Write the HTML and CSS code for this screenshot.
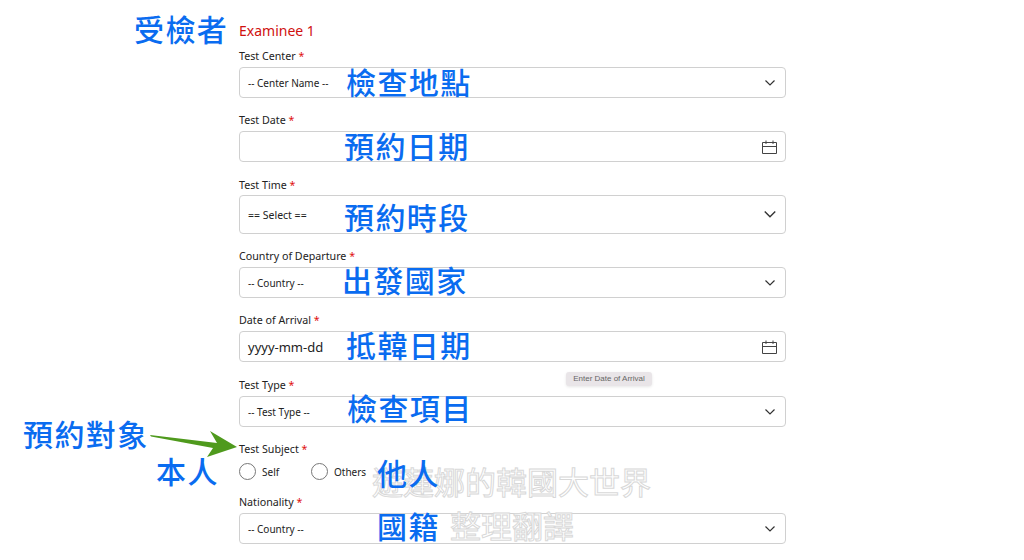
FILE: index.html
```html
<!DOCTYPE html>
<html lang="zh-TW">
<head>
    <meta charset="UTF-8">
    <meta name="viewport" content="width=device-width, initial-scale=1.0">
    <title>Examinee 1</title>
    <link rel="stylesheet" href="styles.css">
</head>
<body>
    <!-- Formulario -->
    <main class="form">
        <h2 class="title">Examinee 1</h2>

        <div class="field">
            <label>Test Center <span class="req">*</span></label>
            <div class="box"><span>-- Center Name --</span>
                <svg class="chevron" viewBox="0 0 10 6"><path d="M0.5 0.5 L5 5 L9.5 0.5"/></svg>
            </div>
        </div>

        <div class="field">
            <label>Test Date <span class="req">*</span></label>
            <div class="box"><span></span>
                <svg class="calendar" viewBox="0 0 15 14"><path d="M0.5 2.5 H14.5 V13.5 H0.5 Z M0.5 6.5 H14.5 M4 0.5 V4 M11 0.5 V4"/></svg>
            </div>
        </div>

        <div class="field low">
            <label>Test Time <span class="req">*</span></label>
            <div class="box tall"><span class="select-text">== Select ==</span>
                <svg class="chevron big" viewBox="0 0 10 6"><path d="M0.5 0.5 L5 5 L9.5 0.5"/></svg>
            </div>
        </div>

        <div class="field">
            <label>Country of Departure <span class="req">*</span></label>
            <div class="box"><span>-- Country --</span>
                <svg class="chevron" viewBox="0 0 10 6"><path d="M0.5 0.5 L5 5 L9.5 0.5"/></svg>
            </div>
        </div>

        <div class="field">
            <label>Date of Arrival <span class="req">*</span></label>
            <div class="box"><span class="placeholder">yyyy-mm-dd</span>
                <svg class="calendar" viewBox="0 0 15 14"><path d="M0.5 2.5 H14.5 V13.5 H0.5 Z M0.5 6.5 H14.5 M4 0.5 V4 M11 0.5 V4"/></svg>
            </div>
        </div>

        <div class="field shifted">
            <label>Test Type <span class="req">*</span></label>
            <div class="box"><span>-- Test Type --</span>
                <svg class="chevron" viewBox="0 0 10 6"><path d="M0.5 0.5 L5 5 L9.5 0.5"/></svg>
            </div>
        </div>

        <div class="field">
            <label>Test Subject <span class="req">*</span></label>
            <div class="radios">
                <span class="radio"></span><span class="radio-text self">Self</span>
                <span class="radio"></span><span class="radio-text">Others</span>
            </div>
        </div>

        <div class="field">
            <label>Nationality <span class="req">*</span></label>
            <div class="box"><span>-- Country --</span>
                <svg class="chevron" viewBox="0 0 10 6"><path d="M0.5 0.5 L5 5 L9.5 0.5"/></svg>
            </div>
        </div>
    </main>

    <!-- Tooltip -->
    <div class="tooltip">Enter Date of Arrival</div>

    <!-- Marca d'agua -->
    <div class="mark mark1">遊蓮娜的韓國大世界</div>
    <div class="mark mark2">整理翻譯</div>

    <!-- Anotacoes -->
    <div class="note n-examinee">受檢者</div>
    <div class="note n-center">檢查地點</div>
    <div class="note n-date">預約日期</div>
    <div class="note n-time">預約時段</div>
    <div class="note n-country">出發國家</div>
    <div class="note n-arrival">抵韓日期</div>
    <div class="note n-type">檢查項目</div>
    <div class="note n-subject">預約對象</div>
    <div class="note n-self">本人</div>
    <div class="note n-others">他人</div>
    <div class="note n-nation">國籍</div>

    <svg class="arrow" viewBox="0 0 90 28"><polygon points="0,5 67,13 60,1 87,17 57,27 63,18 1,6.5"/></svg>
</body>
</html>
```

FILE: styles.css
```css
html, body {
    margin: 0;
    height: 560px;
    overflow: hidden;
    background: #fff;
}

body {
    position: relative;
    font-family: "Noto Sans", Arial, sans-serif;
    color: #222;
}

/* Formulario */
.form {
    width: 547px;
    margin-left: 239px;
    padding-top: 22px;
}

.title {
    margin: 0 0 8px;
    font-size: 14px;
    line-height: 18px;
    font-weight: 400;
    color: #d0100f;
}

.field {
    margin-bottom: 14px;
}

.field.shifted {
    margin-top: 15px;
}

.field label {
    display: block;
    height: 16px;
    margin-bottom: 3px;
    font-size: 10.7px;
    line-height: 16px;
}

.field.low label {
    position: relative;
    top: 1px;
}

.req {
    color: #e01010;
}

.box {
    display: flex;
    align-items: center;
    justify-content: space-between;
    box-sizing: border-box;
    height: 31px;
    padding: 0 8px;
    border: 1px solid #d0d0d0;
    border-radius: 4px;
    font-size: 10px;
    color: #222;
}

.box.tall {
    height: 39px;
}

.select-text {
    font-size: 10.5px;
}

.placeholder {
    font-size: 13px;
}

.chevron {
    width: 10px;
    height: 6px;
    margin-right: 2px;
    fill: none;
    stroke: #333;
    stroke-width: 1.2;
}

.chevron.big {
    width: 12px;
    height: 7px;
    margin-right: 1px;
}

.calendar {
    width: 15px;
    height: 14px;
    fill: none;
    stroke: #444;
    stroke-width: 1;
}

.radios {
    display: flex;
    align-items: center;
    height: 17px;
    margin-top: 6px;
    font-size: 10px;
}

.radio {
    box-sizing: border-box;
    width: 17px;
    height: 17px;
    border: 1px solid #777;
    border-radius: 50%;
}

.radio-text {
    margin-left: 6px;
}

.radio-text.self {
    width: 49px;
}

/* Tooltip */
.tooltip {
    position: absolute;
    left: 566px;
    top: 372px;
    width: 86px;
    height: 14px;
    border-radius: 3px;
    background: #e9e5e8;
    box-shadow: 0 1px 3px rgba(0, 0, 0, 0.1);
    font-family: "Liberation Sans", Arial, sans-serif;
    font-size: 8px;
    line-height: 14px;
    text-align: center;
    color: #666;
}

/* Marca d'agua */
.mark {
    position: absolute;
    font-family: "Noto Sans CJK TC", sans-serif;
    font-size: 31px;
    line-height: 36px;
    white-space: nowrap;
    color: #fff;
    -webkit-text-stroke: 1px #d8d8d8;
}

.mark1 {
    left: 372px;
    top: 463px;
}

.mark2 {
    left: 450px;
    top: 507px;
}

/* Anotacoes */
.note {
    position: absolute;
    font-family: "Noto Sans CJK TC", sans-serif;
    font-size: 30px;
    font-weight: 500;
    line-height: 36px;
    letter-spacing: 1.4px;
    white-space: nowrap;
    color: #0a6cf0;
}

.n-examinee { left: 134px; top: 10px; }
.n-center { left: 346px; top: 63px; }
.n-date { left: 344px; top: 127px; }
.n-time { left: 344px; top: 198px; }
.n-country { left: 342px; top: 261px; }
.n-arrival { left: 346px; top: 326px; }
.n-type { left: 347px; top: 389px; }
.n-subject { left: 23px; top: 415px; }
.n-self { left: 156px; top: 452px; }
.n-others { left: 377px; top: 454px; }
.n-nation { left: 377px; top: 507px; }

.arrow {
    position: absolute;
    left: 150px;
    top: 430px;
    width: 90px;
    height: 28px;
    fill: #4f9a1d;
}
```
